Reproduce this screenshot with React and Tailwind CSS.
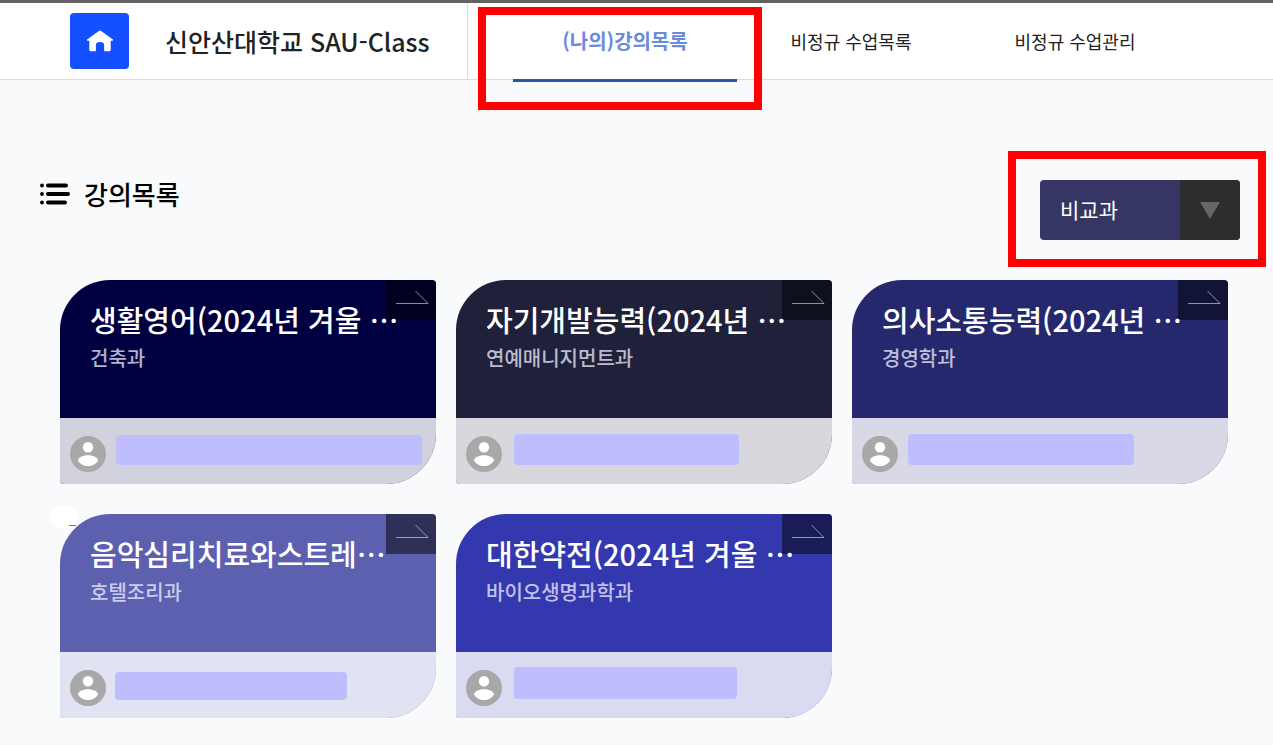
import React from "react";

const courses = [
  { title: "생활영어(2024년 겨울 …", dept: "건축과", color: "bg-[#000040]", bar: "ml-[10px] mt-[17px] h-[30px] w-[306px]" },
  { title: "자기개발능력(2024년 …", dept: "연예매니지먼트과", color: "bg-[#1f203a]", bar: "ml-[12px] mt-[16px] h-[31px] w-[225px]" },
  { title: "의사소통능력(2024년 …", dept: "경영학과", color: "bg-[#25286c]", bar: "ml-[10px] mt-[16px] h-[31px] w-[226px]" },
  { title: "음악심리치료와스트레…", dept: "호텔조리과", color: "bg-[#5c60af]", bar: "ml-[9px] mt-[20px] h-[28px] w-[232px]", patch: true },
  { title: "대한약전(2024년 겨울 …", dept: "바이오생명과학과", color: "bg-[#3438ae]", bar: "ml-[12px] mt-[15px] h-[32px] w-[223px]" },
];

function HomeIcon() {
  return (
    <svg width="28" height="22" viewBox="0 0 28 22" fill="#fff" aria-hidden="true">
      <path d="M12.9 0.9a2 2 0 0 1 2.2 0L26.6 9.2c.9.7.4 1.6-.6 1.6h-1.3v8.9c0 .9-.6 1.5-1.5 1.5h-4.1c-.6 0-1-.4-1-1v-5.4c0-1.7-1.3-2.8-4.1-2.8s-4.1 1.1-4.1 2.8v5.4c0 .6-.4 1-1 1H4.8c-.9 0-1.5-.6-1.5-1.5v-8.9H2c-1 0-1.5-.9-.6-1.6z" />
    </svg>
  );
}

function ListIcon() {
  return (
    <svg width="30" height="24" viewBox="0 0 30 24" aria-hidden="true">
      <g fill="#000">
        <circle cx="2" cy="3.5" r="1.9" />
        <circle cx="2" cy="12" r="1.9" />
        <circle cx="2" cy="20.5" r="1.9" />
        <rect x="6" y="1.5" width="22" height="4" rx="2" />
        <rect x="6" y="10" width="24" height="4" rx="2" />
        <rect x="6" y="18.5" width="21" height="4" rx="2" />
      </g>
    </svg>
  );
}

function Avatar() {
  return (
    <svg className="mt-[18px] shrink-0" width="36" height="36" viewBox="0 0 36 36" aria-hidden="true">
      <circle cx="18" cy="18" r="18" fill="#a8a8a8" />
      <circle cx="18" cy="11.2" r="5.2" fill="#fff" />
      <path d="M8 24.5c0-3 4.6-5.300 10-5.300s10 2.300 10 5.300c-1.900 3.300-5.500 5.600-10 5.600s-8.100-2.300-10-5.600z" fill="#fff" />
    </svg>
  );
}

function CourseCard({ course }) {
  return (
    <li className="relative">
      {course.patch && (
        <span className="absolute -left-[9px] -top-[8px] h-[22px] w-[26px] rounded-lg bg-white">
          <span className="absolute left-[18px] top-[19px] h-px w-[7px] bg-[#77798c]" />
        </span>
      )}
      <a
        href="#course"
        className={"relative block overflow-hidden rounded-tl-[50px] rounded-tr rounded-br-[50px] rounded-bl " + course.color}
      >
        <span className="absolute right-0 top-0 h-10 w-[50px] bg-black/50">
          <svg width="50" height="40" viewBox="0 0 50 40" fill="none" stroke="#e4e4ff" strokeOpacity=".6" aria-hidden="true">
            <path d="M10 23.5H42L29.5 11" />
          </svg>
        </span>
        <div className="relative h-[138px] pl-[30px] pt-5">
          <h3 className="whitespace-nowrap text-[29px] font-medium leading-[38px] text-white">{course.title}</h3>
          <p className="text-[20px] font-medium leading-[40px] text-[#f0f0ff]/75">{course.dept}</p>
        </div>
        <div className="flex h-[66px] items-start bg-[#fcfdff]/83 pl-[10px]">
          <Avatar />
          <span className={"rounded bg-[#bebeff] " + course.bar} />
        </div>
      </a>
    </li>
  );
}

export default function App() {
  return (
    <div className="min-h-screen bg-[#f9fafc] font-['Noto_Sans_CJK_KR',sans-serif]" lang="ko">
      <header className="flex h-20 border-b border-t-[3px] border-b-[#d9dadc] border-t-[#636161] bg-white">
        <div className="flex w-[468px] shrink-0 items-center border-r border-[#d9dadc] pl-[70px]">
          <a href="#home" aria-label="홈" className="flex h-14 w-[59px] items-center justify-center rounded bg-[#1450ff]">
            <HomeIcon />
          </a>
          <span className="ml-9 whitespace-nowrap pt-0.5 text-[25px] font-medium text-[#222]">신안산대학교 SAU-Class</span>
        </div>
        <nav className="ml-[45px] flex text-[18px] text-[#222]">
          <a href="#my" className="relative flex w-[224px] items-center justify-center text-[20px] font-bold text-[#6b8add]">
            (나의)강의목록
            <span className="absolute -bottom-[3px] left-0 h-[3px] w-full bg-[#2a56b0]" />
            <span className="absolute -left-[35px] top-[4px] h-[103px] w-[284px] border-8 border-[#ff0000]" />
          </a>
          <a href="#list" className="flex w-[224px] items-center justify-center pl-1">비정규 수업목록</a>
          <a href="#manage" className="flex w-[224px] items-center justify-center pl-1">비정규 수업관리</a>
        </nav>
      </header>
      <main className="pt-[100px]">
        <div className="flex items-start justify-between pl-10 pr-[33px]">
          <h2 className="flex items-center gap-[14px] text-[26px] font-medium leading-[28px] text-black">
            <ListIcon />
            강의목록
          </h2>
          <div className="relative">
            <select
              aria-label="강의 구분"
              className="block h-[60px] w-[200px] appearance-none rounded bg-[#353663] pl-5 text-[21px] font-normal text-white"
            >
              <option>비교과</option>
            </select>
            <span className="pointer-events-none absolute right-0 top-0 flex h-[60px] w-[60px] items-center justify-center rounded-r bg-[#2c2d2f]">
              <svg width="20" height="17" viewBox="0 0 20 17" fill="#666" aria-hidden="true">
                <path d="M0 0H20L10 17z" />
              </svg>
            </span>
            <span className="pointer-events-none absolute -left-[32px] -top-[29px] h-[116px] w-[258px] border-8 border-[#ff0000]" />
          </div>
        </div>
        <ul className="mt-10 grid grid-cols-3 gap-x-5 gap-y-[30px] pb-[27px] pl-[60px] pr-[45px]">
          {courses.map((c) => (
            <CourseCard key={c.title} course={c} />
          ))}
        </ul>
      </main>
    </div>
  );
}
